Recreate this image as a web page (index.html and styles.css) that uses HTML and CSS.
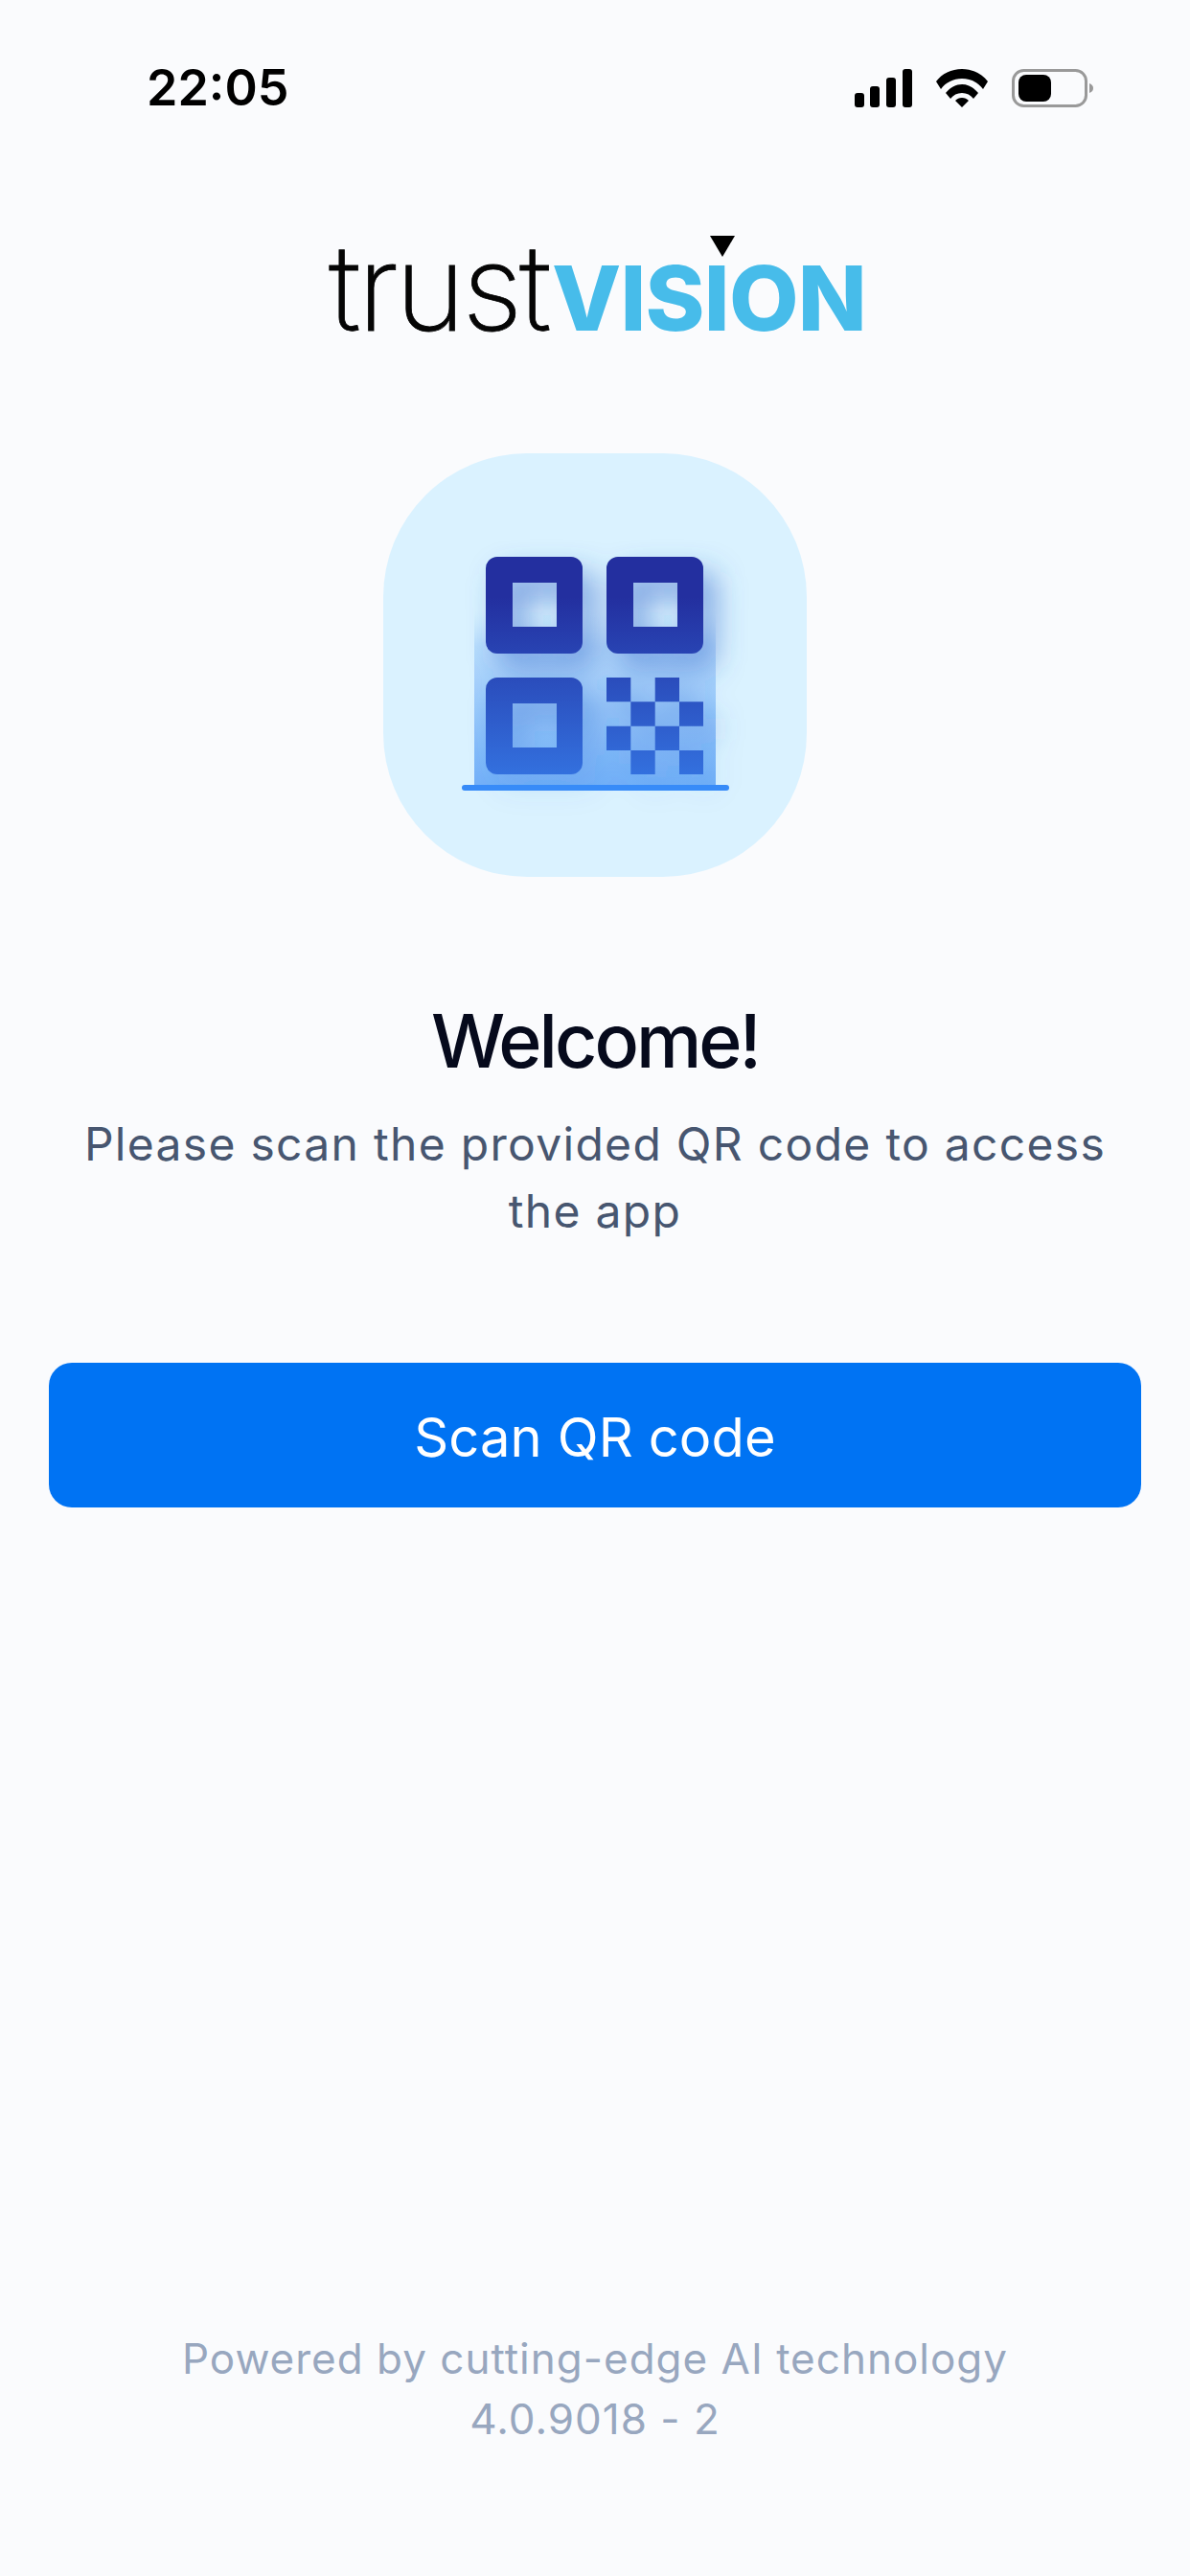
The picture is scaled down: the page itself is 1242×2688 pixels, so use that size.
FILE: index.html
```html
<!DOCTYPE html>
<html lang="en">
<head>
<meta charset="UTF-8">
<meta name="viewport" content="width=device-width, initial-scale=1.0">
<title>TrustVision</title>
<link rel="stylesheet" href="styles.css">
</head>
<body>
  <div class="status-bar">
    <span class="time">22:05</span>
    <div class="status-icons">
      <svg class="signal" width="60" height="40" viewBox="0 0 60 40">
        <rect x="0" y="25" width="10" height="15" rx="3"/>
        <rect x="16" y="18" width="10" height="22" rx="3"/>
        <rect x="33" y="9" width="10" height="31" rx="3"/>
        <rect x="50" y="0" width="10" height="40" rx="3"/>
      </svg>
      <svg class="wifi" width="54" height="40" viewBox="0 0 54 40">
        <path d="M0 13 C6 5 16 0 27 0 C38 0 48 5 54 13 L49 21 C44 14 36 10 27 10 C18 10 10 14 5 21 Z"/>
        <path d="M10 25 C15 19 21 16 27 16 C33 16 39 19 44 25 L39 31 C36 27 32 25 27 25 C22 25 18 27 15 31 Z"/>
        <path d="M20 33 C22 31 24 30 27 30 C30 30 32 31 34 33 L27 40 Z"/>
      </svg>
      <svg class="battery" width="86" height="40" viewBox="0 0 86 40">
        <rect x="1.5" y="1.5" width="76" height="37" rx="11" fill="none" stroke="#999" stroke-width="3"/>
        <rect x="7" y="6" width="34" height="28" rx="8"/>
        <path d="M81 15 C84 16 85 18 85 20 C85 22 84 24 81 25 Z" fill="#999"/>
      </svg>
    </div>
  </div>

  <div class="logo">
    <span class="logo-trust">trust</span><span class="logo-vision">VISION</span>
    <span class="logo-mark"></span>
  </div>

  <div class="qr-tile">
    <svg width="442" height="442" viewBox="0 0 442 442">
      <defs>
        <linearGradient id="panelFill" gradientUnits="userSpaceOnUse" x1="0" y1="165" x2="0" y2="346">
          <stop offset="0" stop-color="#c4e4fd" stop-opacity="0"/>
          <stop offset="0.2" stop-color="#b8dcfc"/>
          <stop offset="1" stop-color="#72b0f8"/>
        </linearGradient>
        <linearGradient id="qrFill" gradientUnits="userSpaceOnUse" x1="0" y1="150" x2="0" y2="335">
          <stop offset="0" stop-color="#232f9f"/>
          <stop offset="1" stop-color="#3370de"/>
        </linearGradient>
        <linearGradient id="shadowFill" gradientUnits="userSpaceOnUse" x1="0" y1="130" x2="0" y2="350">
          <stop offset="0" stop-color="#2f62c8" stop-opacity="0.55"/>
          <stop offset="0.45" stop-color="#2f62c8" stop-opacity="0.45"/>
          <stop offset="1" stop-color="#2f62c8" stop-opacity="0"/>
        </linearGradient>
        <filter id="soft" x="-30%" y="-30%" width="160%" height="160%">
          <feGaussianBlur stdDeviation="15"/>
        </filter>
        <path id="qrShape" fill-rule="evenodd" d="M119 108H196A12 12 0 0 1 208 120V197A12 12 0 0 1 196 209H119A12 12 0 0 1 107 197V120A12 12 0 0 1 119 108ZM135 135V181H181V135ZM245 108H322A12 12 0 0 1 334 120V197A12 12 0 0 1 322 209H245A12 12 0 0 1 233 197V120A12 12 0 0 1 245 108ZM261 135V181H307V135ZM119 234H196A12 12 0 0 1 208 246V323A12 12 0 0 1 196 335H119A12 12 0 0 1 107 323V246A12 12 0 0 1 119 234ZM135 261V307H181V261ZM233 234H258.3V259.3H233ZM283.7 234H309V259.3H283.7ZM258.3 259.3H283.7V284.7H258.3ZM309 259.3H334V284.7H309ZM233 284.7H258.3V310H233ZM283.7 284.7H309V310H283.7ZM258.3 310H283.7V335H258.3ZM309 310H334V335H309Z"/>
      </defs>
      <rect x="95" y="165" width="252" height="181" fill="url(#panelFill)"/>
      <use href="#qrShape" transform="translate(13 16)" fill="url(#shadowFill)" filter="url(#soft)"/>
      <use href="#qrShape" fill="url(#qrFill)"/>
      <rect x="82" y="346" width="279" height="6" rx="3" fill="#378bf8"/>
    </svg>
  </div>

  <h1 class="title">Welcome!</h1>
  <p class="subtitle">Please scan the provided QR code to access the app</p>

  <button class="scan-btn">Scan QR code</button>

  <div class="footer">
    <div>Powered by cutting-edge AI technology</div>
    <div>4.0.9018 - 2</div>
  </div>
</body>
</html>
```

FILE: styles.css
```css
body {
  font-family: Inter, "Noto Sans", sans-serif;
  margin: 0;
  width: 1242px;
  height: 2688px;
  overflow: hidden;
  background-color: #fafbfd;
  display: flex;
  flex-direction: column;
  align-items: center;
}
.status-bar {
  width: 100%;
  box-sizing: border-box;
  padding: 66px 100px 0 153px;
  display: flex;
  justify-content: space-between;
  align-items: center;
  color: #000;
}
.time {
  font-size: 52px;
  font-weight: 600;
  line-height: 52px;
}
.status-icons {
  display: flex;
  align-items: center;
  gap: 25px;
}
.status-icons svg {
  display: block;
  fill: #000;
}
.logo {
  position: relative;
  display: flex;
  align-items: baseline;
  margin-top: 117px;
  margin-left: 5px;
  height: 131px;
  line-height: 130px;
}
.logo-trust {
  font-size: 125px;
  font-weight: 200;
  -webkit-text-stroke: 0.8px #050505;
  letter-spacing: -3.5px;
  color: #050505;
}
.logo-vision {
  font-size: 94px;
  font-weight: 800;
  letter-spacing: -0.8px;
  color: #47bcea;
  margin-left: 4px;
}
.logo-mark {
  position: absolute;
  left: 398px;
  top: 11px;
  width: 0;
  height: 0;
  border-left: 13px solid transparent;
  border-right: 13px solid transparent;
  border-top: 22px solid #000;
}
.qr-tile {
  width: 442px;
  height: 442px;
  margin-top: 107px;
  background-color: #daf2ff;
  border-radius: 150px;
}
.qr-tile svg {
  display: block;
}
.title {
  margin: 125px 0 0;
  font-size: 77px;
  font-weight: 500;
  line-height: 92px;
  letter-spacing: -3px;
  color: #060a1c;
}
.subtitle {
  margin: 27px 0 0;
  width: 1100px;
  font-size: 48px;
  line-height: 70px;
  letter-spacing: 1.3px;
  text-align: center;
  color: #475670;
}
.scan-btn {
  width: 1140px;
  height: 151px;
  margin-top: 123px;
  padding: 5px 0 0;
  border: none;
  border-radius: 24px;
  background-color: #0073f3;
  color: #fff;
  font-family: inherit;
  font-size: 56px;
  letter-spacing: 0.15px;
}
.footer {
  margin-top: auto;
  margin-bottom: 132px;
  font-size: 44px;
  line-height: 63px;
  letter-spacing: 1px;
  text-align: center;
  color: #98a7bf;
}
```
